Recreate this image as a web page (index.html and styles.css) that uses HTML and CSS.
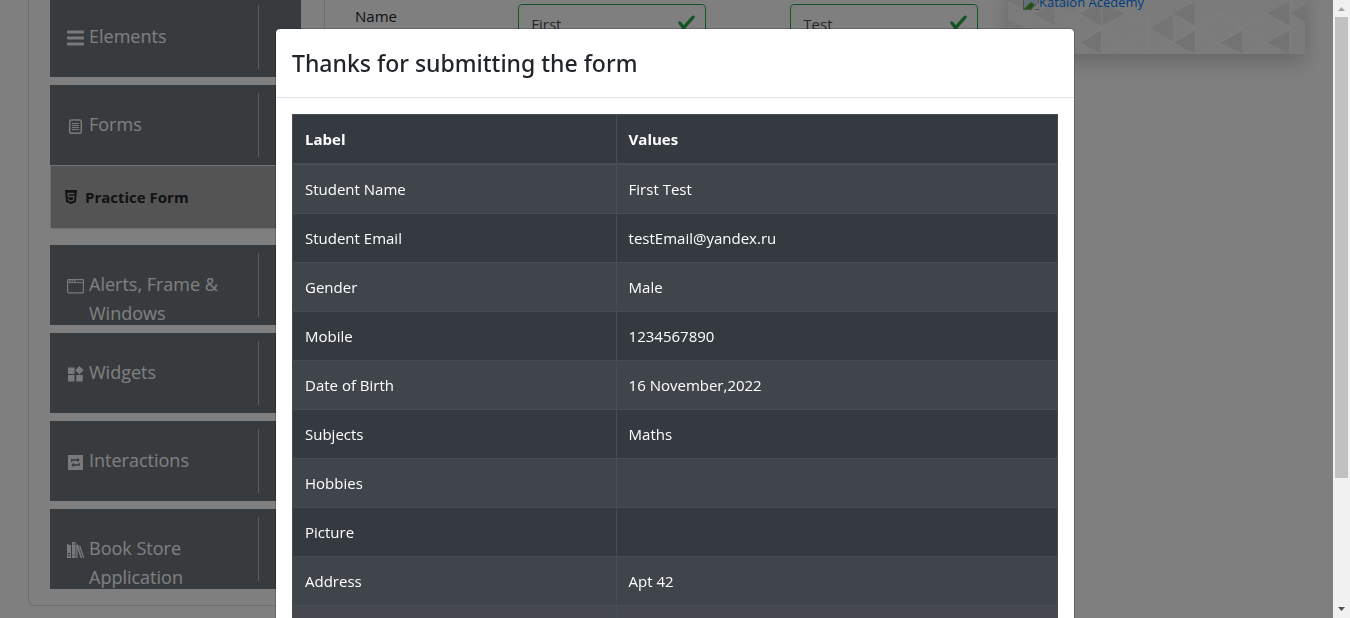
FILE: index.html
```html
<!DOCTYPE html>
<html lang="en">
<head>
<meta charset="utf-8">
<title>Practice Form</title>
<link rel="stylesheet" href="styles.css">
</head>
<body>
<div class="viewport">
  <div class="page">
    <nav class="panel" aria-label="Sections">
      <button class="group" type="button">
        <svg class="group-icon" viewBox="0 0 17 17"><path d="M1 3h15M1 9h15M1 15h15" stroke="currentColor" stroke-width="2.8" stroke-linecap="round"/></svg>
        <span class="group-text">Elements</span>
      </button>
      <div class="section">
        <button class="group" type="button">
          <svg class="group-icon" viewBox="0 0 17 17" fill="none" stroke="currentColor"><rect x="2.700" y="3" width="11.600" height="13.300" rx="1.500" stroke-width="1.500"/><path d="M5 6.500h7M5 8.500h7M5 10.500h7M5 12.500h7" stroke-width="1"/></svg>
          <span class="group-text">Forms</span>
        </button>
        <a class="item" href="#form">
          <svg class="item-icon" viewBox="0 0 12 14"><path d="M0 0h12l-1.100 12L6 14l-4.900-2z" fill="currentColor"/><path d="M9.500 3.500H3l.3 3h5.600l-.4 3.500L6 11 3.500 10l-.2-1.300" fill="none" stroke="#a9a9a9" stroke-width="1.300"/></svg>
          <span>Practice Form</span>
        </a>
      </div>
      <button class="group" type="button">
        <svg class="group-icon" viewBox="0 0 17 17" fill="none" stroke="currentColor"><rect x=".6" y="2.600" width="15.800" height="13.300" rx=".8" stroke-width="1.200"/><path d="M1 5.600h15" stroke-width="1"/><path d="M2 4h1.500M4.500 4H6M7 4h1.500" stroke-width="1.600"/></svg>
        <span class="group-text">Alerts, Frame &amp; Windows</span>
      </button>
      <button class="group" type="button">
        <svg class="group-icon" viewBox="0 0 17 17" fill="currentColor"><path d="M1 2.500h6.500V9H1zM1 10h6.500v6.500H1zM9.300 10h6.500v6.500H9.300zM12.400 1l4.200 4.200-4.200 4.200-4.200-4.200z"/></svg>
        <span class="group-text">Widgets</span>
      </button>
      <button class="group" type="button">
        <svg class="group-icon" viewBox="0 0 17 17"><path d="M1 2h15v15H1z" fill="currentColor"/><path d="M4.700 9V7h6M12.300 10v2h-6" fill="none" stroke="#6e767c" stroke-width="1.300"/><path d="M10.200 4.800L12.800 7l-2.600 2.200zM6.800 9.800L4.200 12l2.600 2.200z" fill="#6e767c"/></svg>
        <span class="group-text">Interactions</span>
      </button>
      <button class="group" type="button">
        <svg class="group-icon" viewBox="0 0 17 17" fill="currentColor"><path d="M0 3h1.500v1H3V4h1v13H0zM5 1h3.500v16H5zM9.200 4l1.800-.7L15 17h-1.500L10.500 7.500V17H9.200zM12 5l1.200-.4L17.500 17H16z"/><path d="M1 12.500h2M1 14.500h2M6 3h1.500M6 14h1.500" stroke="#6e767c"/></svg>
        <span class="group-text">Book Store Application</span>
      </button>
    </nav>

    <form class="form" id="form">
      <label class="cell" for="first">Name</label>
      <div class="cell field">
        <input class="input" id="first" value="First" aria-label="First name">
        <svg class="tick" viewBox="0 0 8 8"><path fill="#28a745" d="M2.300 6.730L.6 4.530c-.4-1.040.46-1.400 1.100-.8l1.100 1.400 3.400-3.800c.6-.63 1.600-.27 1.200.7l-4 4.600c-.43.5-.8.4-1.100.1z"/></svg>
      </div>
      <div class="cell"></div>
      <div class="cell field">
        <input class="input" id="last" value="Test" aria-label="Last name">
        <svg class="tick" viewBox="0 0 8 8"><path fill="#28a745" d="M2.300 6.730L.6 4.530c-.4-1.040.46-1.400 1.100-.8l1.100 1.400 3.400-3.800c.6-.63 1.600-.27 1.200.7l-4 4.600c-.43.5-.8.4-1.100.1z"/></svg>
      </div>
    </form>

    <aside class="ad">
      <svg class="ad-pattern" viewBox="24 -48 891 210" preserveAspectRatio="none">
        <g fill="#e6e6e6">
          <path d="M238 40l65-37v74zM376 40l-71-37v74zM518 40l69-35v72zM800 40l70-37v74zM870 40l45-25v50z"/>
          <path d="M240 128l63-36v70zM518 128l67-36v70zM658 128l70-36v70zM800 128l68-36v70z"/>
        </g>
        <g fill="#ebebeb">
          <path d="M24 -20l70 15v46L24 5zM94 40l70-35v70zM24 60l70 30-70 36zM447 85l71-40v80zM94 -10l144 50-74-70z"/>
        </g>
        <path d="M24 5l71 35 70-35 73 35 67-37 71 37 71 45 71-45 69 45 71-45 70 45 72-45 70 45M24 85l71-45 69 45 74-45 67 45 71-45M24 165l71-37-71-43M164 85l74 43 67-43 71 43 71-43 71 43 69-43 71 43 70-43 72 43 70-43M238 128l67 37 71-37 71 37 71-37 69 37 71-37 70 37 72-37 45 26M95 0v60M236 0v85M305-48v210M447 45v117M587-48v210M728 85v77M870-48v210" fill="none" stroke="#fff" stroke-opacity=".5" stroke-width="5"/>
      </svg>
      <a class="ad-link" href="#ad">
        <svg class="broken" viewBox="0 0 16 16"><path d="M.5.500H11L15.500 5v4L9 15.500H.500z" fill="#c7dcf5" stroke="#a0a0a0"/><path d="M1 15l7-7 4 3-4 4z" fill="#4fa02e"/><path d="M0 15.500h8M11 15.500h5V10" fill="none" stroke="#a0a0a0"/><path d="M16 9L9 16h2l5-5z" fill="#fff"/></svg><span>Katalon Acedemy</span>
      </a>
    </aside>
  </div>
  <div class="scrollbar" aria-hidden="true">
    <svg class="arrow" viewBox="0 0 17 17"><path d="M5 11h7L8.500 7z" fill="#a3a3a3"/></svg>
    <div class="thumb"></div>
    <svg class="arrow" viewBox="0 0 17 17"><path d="M5 6h7l-3.500 4z" fill="#505050"/></svg>
  </div>
</div>

<div class="backdrop"></div>
<div class="modal">
  <section class="dialog" role="dialog" aria-modal="true" aria-labelledby="title">
    <header class="dialog-head"><h1 class="title" id="title">Thanks for submitting the form</h1></header>
    <div class="dialog-body">
      <table class="table">
        <thead><tr><th class="label-col">Label</th><th>Values</th></tr></thead>
        <tbody>
          <tr><td>Student Name</td><td>First Test</td></tr>
          <tr><td>Student Email</td><td>testEmail@yandex.ru</td></tr>
          <tr><td>Gender</td><td>Male</td></tr>
          <tr><td>Mobile</td><td>1234567890</td></tr>
          <tr><td>Date of Birth</td><td>16 November,2022</td></tr>
          <tr><td>Subjects</td><td>Maths</td></tr>
          <tr><td>Hobbies</td><td></td></tr>
          <tr><td>Picture</td><td></td></tr>
          <tr><td>Address</td><td>Apt 42</td></tr>
          <tr class="current"><td>&nbsp;</td><td></td></tr>
        </tbody>
      </table>
    </div>
  </section>
</div>
</body>
</html>
```
FILE: styles.css
```css
*, *::before, *::after { box-sizing: border-box; }

body {
  margin: 0;
  height: 100vh;
  overflow: hidden;
  background: #fff;
  color: #212529;
  font-family: "Segoe UI", "Open Sans", "Noto Sans", sans-serif;
  font-size: 15px;
  line-height: 24px;
}

.viewport {
  display: grid;
  grid-template-columns: 1fr 17px;
  height: 100vh;
  overflow: hidden;
}

/* scrolled page content */
.page {
  display: grid;
  grid-template-columns: 297fr 623fr 297fr;
  align-items: start;
  gap: 30px;
  padding: 0 28px;
  margin-top: -16px;
}

.panel {
  display: flex;
  flex-direction: column;
  gap: 8px;
  padding: 13px 23px 16px 21px;
  border: 1px solid #dfdfdf;
  border-top: 0;
  border-radius: 0 0 6px 6px;
}

.group {
  position: relative;
  display: flex;
  align-items: flex-start;
  gap: 5px;
  width: 100%;
  height: 80px;
  padding: 25px 60px 0 17px;
  overflow: hidden;
  border: 0;
  background: #6e767c;
  color: #fff;
  font: inherit;
  font-size: 18px;
  line-height: 29px;
  text-align: left;
}

.group::after {
  content: "";
  position: absolute;
  top: 8px;
  bottom: 8px;
  right: 42px;
  width: 1px;
  background: #bbb;
}

.group-icon {
  flex: none;
  width: 17px;
  height: 17px;
  margin-top: 7px;
  color: #f2f2f2;
}

.section { margin-bottom: 8px; }

.item {
  display: flex;
  align-items: center;
  gap: 8px;
  height: 64px;
  padding: 0 14px;
  border: 1px solid #dee2e6;
  background: #a9a9a9;
  color: #212529;
  font-weight: 700;
  text-decoration: none;
}

.item-icon {
  width: 12px;
  height: 14px;
}

.form {
  display: grid;
  grid-template-columns: 3fr 4fr 1fr 4fr;
  margin: 20px -15px 0;
}

.cell {
  min-width: 0;
  padding: 0 15px;
}

.field { position: relative; }

.input {
  width: 100%;
  height: 38px;
  padding: 7px 36px 5px 12px;
  border: 1px solid #28a745;
  border-radius: 4px;
  background: #fff;
  color: #495057;
  font: inherit;
}

.tick {
  position: absolute;
  top: 9px;
  right: 25px;
  width: 19px;
  height: 19px;
}

.ad {
  position: relative;
  height: 70px;
  padding: 6px 15px;
  background: #f7f7f7;
  box-shadow: 0 8px 20px rgba(0, 0, 0, .2);
}

.ad-pattern {
  position: absolute;
  inset: 0;
  width: 100%;
  height: 100%;
}

.ad-link {
  position: relative;
  display: flex;
  align-items: center;
  color: #007bff;
  font-size: 13px;
  text-decoration: none;
}

.broken {
  width: 16px;
  height: 16px;
}

.scrollbar {
  position: relative;
  z-index: 3;
  display: grid;
  grid-template-rows: 17px 1fr 17px;
  height: 100vh;
  background: #f1f1f1;
}

.thumb {
  height: 79%;
  margin: 0 2px;
  background: #c1c1c1;
}

.arrow {
  width: 17px;
  height: 17px;
}

.backdrop {
  position: fixed;
  inset: 0;
  z-index: 1;
  background: rgba(0, 0, 0, .5);
}

.modal {
  position: fixed;
  inset: 0;
  z-index: 2;
  padding-top: 28px;
  overflow: hidden;
}

.dialog {
  max-width: 800px;
  margin: 0 auto;
  border: 1px solid rgba(0, 0, 0, .2);
  border-radius: 5px;
  background: #fff;
  background-clip: padding-box;
}

.dialog-head {
  padding: 16px;
  border-bottom: 1px solid #dee2e6;
}

.title {
  margin: 0;
  font-family: "Segoe UI", "Noto Sans", "Open Sans", sans-serif;
  font-size: 23px;
  font-weight: 500;
  line-height: 36px;
}

.dialog-body { padding: 16px; }

.table {
  width: 100%;
  border: 1px solid #454d55;
  border-collapse: collapse;
  background: #343a40;
  color: #fff;
}

.table th,
.table td {
  padding: 12px;
  border: 1px solid #454d55;
  text-align: left;
}

.table thead th { border-bottom-width: 2px; }

.label-col { width: 42.3%; }

.table tbody tr:nth-child(odd) { background: #40444b; }

.table tbody .current { background: #45494f; }
```
